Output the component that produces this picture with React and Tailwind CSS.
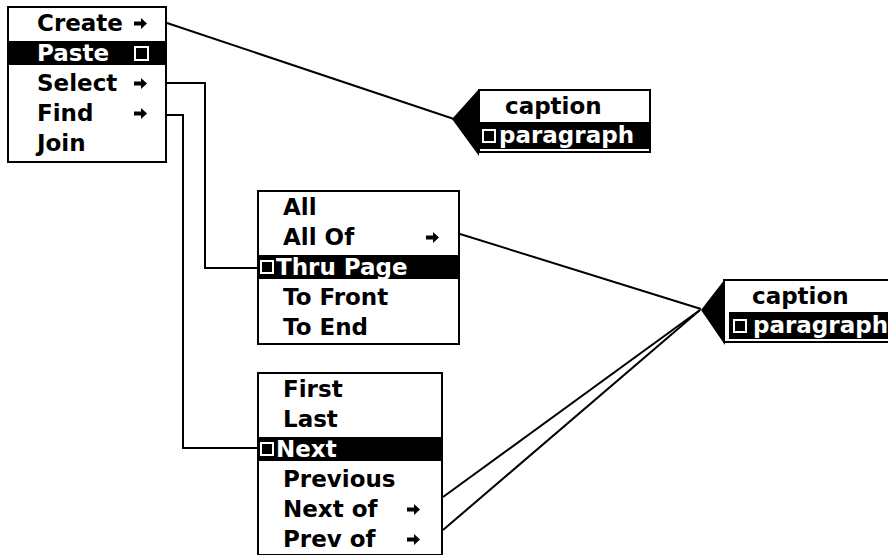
import React from "react";

const Arrow = () => (
  <svg width="13" height="11" viewBox="0 0 13 11" className="block">
    <polygon points="0,3.5 7,3.5 7,0 13,5.5 7,11 7,7.5 0,7.5" fill="currentColor" />
  </svg>
);

const Square = ({ size = 14 }) => (
  <span
    className="block border-2 border-white bg-black shrink-0"
    style={{ width: size, height: size }}
  />
);

function Row({ label, arrow, pl, pr }) {
  return (
    <div className="h-[30px] flex items-center justify-between" style={{ paddingLeft: pl, paddingRight: pr }}>
      <span className="whitespace-nowrap leading-none">{label}</span>
      {arrow ? <Arrow /> : null}
    </div>
  );
}

function HiRow({ label, squareLeft, pl, pr }) {
  return (
    <div className="h-[30px] py-[3px]">
      <div
        className="h-[24px] bg-black text-white flex items-center"
        style={{ paddingLeft: pl, paddingRight: pr, justifyContent: squareLeft ? "flex-start" : "space-between" }}
      >
        {squareLeft ? (
          <>
            <Square size={14} />
            <span className="whitespace-nowrap leading-none ml-[2px]">{label}</span>
          </>
        ) : (
          <>
            <span className="whitespace-nowrap leading-none">{label}</span>
            <Square size={15} />
          </>
        )}
      </div>
    </div>
  );
}

function Caption({ capPl, bandMl, sqPl, gap }) {
  return (
    <div className="w-[173px] border-2 border-black bg-white">
      <div className="h-[31px] flex items-center whitespace-nowrap leading-none" style={{ paddingLeft: capPl }}>
        caption
      </div>
      <div
        className="h-[27px] mb-[2px] bg-black text-white flex items-center"
        style={{ marginLeft: bandMl, paddingLeft: sqPl }}
      >
        <Square size={14} />
        <span className="whitespace-nowrap leading-none" style={{ marginLeft: gap }}>paragraph</span>
      </div>
    </div>
  );
}

export default function App() {
  return (
    <div
      className="relative w-[888px] h-[555px] bg-white overflow-hidden text-black text-[23px] font-bold"
      style={{ fontFamily: '"DejaVu Sans", sans-serif' }}
    >
      <svg className="absolute inset-0" width="888" height="555" viewBox="0 0 888 555">
        <g stroke="black" strokeWidth="2" fill="none">
          <polyline points="167,23 454,119" />
          <polyline points="167,83 205,83 205,268 257,268" />
          <polyline points="167,115 183,115 183,448 257,448" />
          <polyline points="460,234 701,309" />
          <polyline points="443,497 700,310" />
          <polyline points="443,530 700,310" />
        </g>
        <polygon points="479,89 452,119 479,156" fill="black" />
        <polygon points="725,279 701,310 725,345" fill="black" />
      </svg>

      {/* Main menu */}
      <div className="absolute left-[7px] top-[6px] w-[160px] border-2 border-black bg-white pb-[3px]">
        <Row label="Create" arrow pl={28} pr={18} />
        <HiRow label="Paste" pl={28} pr={16} />
        <Row label="Select" arrow pl={28} pr={18} />
        <Row label="Find" arrow pl={28} pr={18} />
        <Row label="Join" pl={28} pr={18} />
      </div>

      {/* Select submenu */}
      <div className="absolute left-[257px] top-[190px] w-[203px] border-2 border-black bg-white pb-[1px]">
        <Row label="All" pl={24} pr={19} />
        <Row label="All Of" arrow pl={24} pr={19} />
        <HiRow label="Thru Page" squareLeft pl={1} pr={0} />
        <Row label="To Front" pl={24} pr={19} />
        <Row label="To End" pl={24} pr={19} />
      </div>

      {/* Find submenu */}
      <div className="absolute left-[257px] top-[372px] w-[186px] border-2 border-black bg-white">
        <Row label="First" pl={24} pr={21} />
        <Row label="Last" pl={24} pr={21} />
        <HiRow label="Next" squareLeft pl={1} pr={0} />
        <Row label="Previous" pl={24} pr={21} />
        <Row label="Next of" arrow pl={24} pr={21} />
        <Row label="Prev of" arrow pl={24} pr={21} />
      </div>

      {/* Caption boxes */}
      <div className="absolute left-[478px] top-[89px]">
        <Caption capPl={25} bandMl={0} sqPl={2} gap={3} />
      </div>
      <div className="absolute left-[723px] top-[279px]">
        <Caption capPl={27} bandMl={4} sqPl={4} gap={6} />
      </div>
    </div>
  );
}
